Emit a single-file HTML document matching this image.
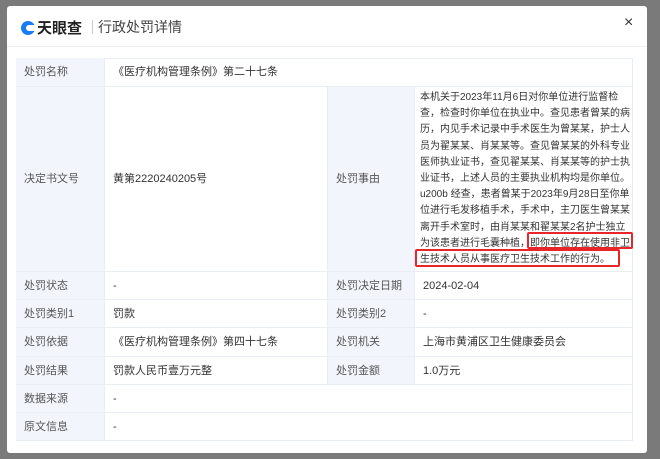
<!DOCTYPE html>
<html><head><meta charset="utf-8"><style>
*{margin:0;padding:0;box-sizing:border-box}
body{width:660px;height:459px;background:#7a7a7a;font-family:"Liberation Sans","Noto Sans CJK SC",sans-serif;position:relative;overflow:hidden;color:#333}
.modal{position:absolute;left:7px;top:6px;width:640px;height:447px;background:#fff;border-radius:3px}
.hd{position:absolute;left:0;top:0;width:640px;height:41px;border-bottom:1px solid #eee}
.logo{position:absolute;left:14px;top:11px;font-size:15px;font-weight:bold;color:#222;letter-spacing:0}
.logo i{display:inline-block;width:14px;height:14px;border-radius:50%;background:#1a7cf0;vertical-align:-2px;margin-right:2px;position:relative}
.logo i:after{content:"";position:absolute;left:5px;top:4px;width:9px;height:6px;background:#fff;border-radius:3px 0 0 3px}
.sep{position:absolute;left:85px;top:14px;width:1px;height:14px;background:#ccc}
.ttl{position:absolute;left:91px;top:11px;font-size:14px;color:#444}
.x{position:absolute;left:617px;top:8px;font-size:16px;color:#333}
.c{position:absolute;font-size:11px;line-height:14px;border-right:1px solid #e9eef5;border-bottom:1px solid #e9eef5;display:flex;align-items:center;padding-left:8px}
.l{background:#f2f6fc;color:#555}
.txt{position:absolute;left:420px;top:90px;font-size:10px;line-height:16.2px;color:#333;white-space:nowrap}
.rb{position:absolute;border:2px solid #e8262a;border-radius:2px}
</style></head><body>
<div class="modal">
<div class="hd"><div class="logo"><i></i>天眼查</div><div class="sep"></div><div class="ttl">行政处罚详情</div><div class="x">×</div></div>
</div>
<div style="position:absolute;left:16px;top:58px;width:617px;height:383px;border-top:1px solid #e9eef5;border-left:1px solid #e9eef5"></div>
<div class="c l" style="left:16px;top:58px;width:89px;height:29px">处罚名称</div>
<div class="c" style="left:105px;top:58px;width:528px;height:29px">《医疗机构管理条例》第二十七条</div>
<div class="c l" style="left:16px;top:87px;width:89px;height:185px">决定书文号</div>
<div class="c" style="left:105px;top:87px;width:223px;height:185px">黄第2220240205号</div>
<div class="c l" style="left:328px;top:87px;width:87px;height:185px">处罚事由</div>
<div class="c" style="left:415px;top:87px;width:218px;height:185px"></div>
<div class="txt">本机关于2023年11月6日对你单位进行监督检<br>查，检查时你单位在执业中。查见患者曾某的病<br>历，内见手术记录中手术医生为曾某某，护士人<br>员为翟某某、肖某某等。查见曾某某的外科专业<br>医师执业证书，查见翟某某、肖某某等的护士执<br>业证书，上述人员的主要执业机构均是你单位。<br>u200b 经查，患者曾某于2023年9月28日至你单<br>位进行毛发移植手术，手术中，主刀医生曾某某<br>离开手术室时，由肖某某和翟某某2名护士独立<br>为该患者进行毛囊种植，即你单位存在使用非卫<br>生技术人员从事医疗卫生技术工作的行为。</div>
<div class="rb" style="left:527px;top:232px;width:106px;height:17px"></div>
<div class="rb" style="left:415px;top:249px;width:205px;height:18px"></div>
<div class="c l" style="left:16px;top:272px;width:89px;height:28px">处罚状态</div>
<div class="c" style="left:105px;top:272px;width:223px;height:28px">-</div>
<div class="c l" style="left:328px;top:272px;width:87px;height:28px">处罚决定日期</div>
<div class="c" style="left:415px;top:272px;width:218px;height:28px">2024-02-04</div>
<div class="c l" style="left:16px;top:300px;width:89px;height:28px">处罚类别1</div>
<div class="c" style="left:105px;top:300px;width:223px;height:28px">罚款</div>
<div class="c l" style="left:328px;top:300px;width:87px;height:28px">处罚类别2</div>
<div class="c" style="left:415px;top:300px;width:218px;height:28px">-</div>
<div class="c l" style="left:16px;top:328px;width:89px;height:29px">处罚依据</div>
<div class="c" style="left:105px;top:328px;width:223px;height:29px">《医疗机构管理条例》第四十七条</div>
<div class="c l" style="left:328px;top:328px;width:87px;height:29px">处罚机关</div>
<div class="c" style="left:415px;top:328px;width:218px;height:29px">上海市黄浦区卫生健康委员会</div>
<div class="c l" style="left:16px;top:357px;width:89px;height:28px">处罚结果</div>
<div class="c" style="left:105px;top:357px;width:223px;height:28px">罚款人民币壹万元整</div>
<div class="c l" style="left:328px;top:357px;width:87px;height:28px">处罚金额</div>
<div class="c" style="left:415px;top:357px;width:218px;height:28px">1.0万元</div>
<div class="c l" style="left:16px;top:385px;width:89px;height:28px">数据来源</div>
<div class="c" style="left:105px;top:385px;width:528px;height:28px">-</div>
<div class="c l" style="left:16px;top:413px;width:89px;height:28px">原文信息</div>
<div class="c" style="left:105px;top:413px;width:528px;height:28px">-</div>
</body></html>
